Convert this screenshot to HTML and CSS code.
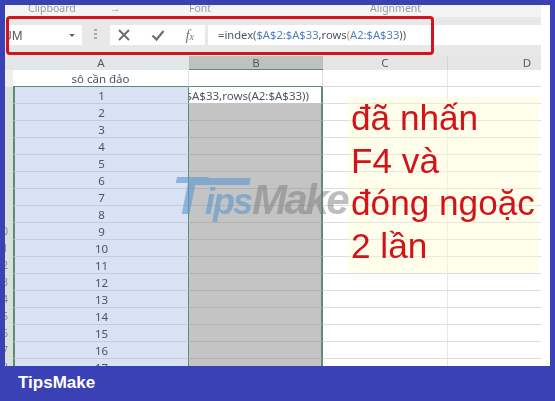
FILE: index.html
```html
<!DOCTYPE html>
<html lang="en">
<head>
    <meta charset="UTF-8">
    <meta name="viewport" content="width=device-width, initial-scale=1.0">
    <title>TipsMake</title>
    <link rel="stylesheet" href="styles.css">
</head>
<body>
    <div class="shot">
        <!-- ribbon group labels, cut off at the top -->
        <div class="ribbon">
            <span class="group group-clip">Clipboard</span>
            <span class="group group-launch">→</span>
            <span class="group group-font">Font</span>
            <span class="group group-align">Alignment</span>
        </div>

        <div class="formula-bar">
            <div class="name-box">
                <span class="name-text">UM</span>
                <span class="name-arrow"></span>
            </div>
            <div class="grip"></div>
            <div class="fx-box">
                <svg class="fx-icon" width="14" height="14" viewBox="0 0 14 14"><path d="M2 2 L12 12 M12 2 L2 12" fill="none" stroke="#6f6f6f" stroke-width="2"/></svg>
                <svg class="fx-icon" width="14" height="14" viewBox="0 0 14 14"><path d="M1.5 7.5 L5.5 11.5 L12.5 3" fill="none" stroke="#6f6f6f" stroke-width="2.2"/></svg>
                <span class="fx-text">f<small>x</small></span>
            </div>
            <div class="formula-input">=index(<span class="ref">$A$2:$A$33</span>,rows<span class="paren">(</span><span class="ref">A2:$A$33</span>))</div>
        </div>

        <div class="col-heads">
            <div class="corner"></div>
            <div class="head head-a">A</div>
            <div class="head head-b">B</div>
            <div class="head head-c">C</div>
            <div class="head head-d">D</div>
        </div>

        <div class="row row-title"><div class="gutter"></div><div class="cell a">sô cần đảo</div><div class="cell b"></div><div class="cell c"></div><div class="cell d"></div></div>
        <div class="row first"><div class="gutter"></div><div class="cell a">1</div><div class="cell b active"><span>$A$33,rows(A2:$A$33))</span></div><div class="cell c"></div><div class="cell d"></div></div>
        <div class="row"><div class="gutter"></div><div class="cell a">2</div><div class="cell b"></div><div class="cell c"></div><div class="cell d"></div></div>
        <div class="row"><div class="gutter"></div><div class="cell a">3</div><div class="cell b"></div><div class="cell c"></div><div class="cell d"></div></div>
        <div class="row"><div class="gutter"></div><div class="cell a">4</div><div class="cell b"></div><div class="cell c"></div><div class="cell d"></div></div>
        <div class="row"><div class="gutter"></div><div class="cell a">5</div><div class="cell b"></div><div class="cell c"></div><div class="cell d"></div></div>
        <div class="row"><div class="gutter"></div><div class="cell a">6</div><div class="cell b"></div><div class="cell c"></div><div class="cell d"></div></div>
        <div class="row"><div class="gutter"></div><div class="cell a">7</div><div class="cell b"></div><div class="cell c"></div><div class="cell d"></div></div>
        <div class="row"><div class="gutter"></div><div class="cell a">8</div><div class="cell b"></div><div class="cell c"></div><div class="cell d"></div></div>
        <div class="row"><div class="gutter">0</div><div class="cell a">9</div><div class="cell b"></div><div class="cell c"></div><div class="cell d"></div></div>
        <div class="row"><div class="gutter">1</div><div class="cell a">10</div><div class="cell b"></div><div class="cell c"></div><div class="cell d"></div></div>
        <div class="row"><div class="gutter">2</div><div class="cell a">11</div><div class="cell b"></div><div class="cell c"></div><div class="cell d"></div></div>
        <div class="row"><div class="gutter">3</div><div class="cell a">12</div><div class="cell b"></div><div class="cell c"></div><div class="cell d"></div></div>
        <div class="row"><div class="gutter">4</div><div class="cell a">13</div><div class="cell b"></div><div class="cell c"></div><div class="cell d"></div></div>
        <div class="row"><div class="gutter">5</div><div class="cell a">14</div><div class="cell b"></div><div class="cell c"></div><div class="cell d"></div></div>
        <div class="row"><div class="gutter">6</div><div class="cell a">15</div><div class="cell b"></div><div class="cell c"></div><div class="cell d"></div></div>
        <div class="row"><div class="gutter">7</div><div class="cell a">16</div><div class="cell b"></div><div class="cell c"></div><div class="cell d"></div></div>
        <div class="row"><div class="gutter">8</div><div class="cell a">17</div><div class="cell b"></div><div class="cell c"></div><div class="cell d"></div></div>

        <!-- things drawn over the sheet -->
        <div class="red-box"></div>
        <div class="note">
            <div>đã nhấn</div>
            <div>F4 và</div>
            <div>đóng ngoặc</div>
            <div>2 lần</div>
        </div>
        <div class="watermark">
            <span class="mark-tips"><span class="mark-t">T</span><span class="mark-bar"></span><span class="mark-ips">ips</span></span><span class="mark-make">Make</span>
        </div>
    </div>

    <div class="footer">TipsMake</div>
</body>
</html>
```

FILE: styles.css
```css
html, body {
    margin: 0;
    padding: 0;
    width: 555px;
    height: 401px;
    overflow: hidden;
}

body {
    background: #3a41b5;
    display: flex;
    flex-direction: column;
}

/* the pasted excel picture */
.shot {
    position: relative;
    width: 545px;
    height: 361px;
    margin: 5px 5px 0 5px;
    background: #ffffff;
    overflow: hidden;
    flex: none;
    font-family: "Noto Sans", sans-serif;
    color: #4b5563;
    filter: blur(0.35px);
}

.ribbon {
    height: 12px;
    margin-right: 9px;
    box-sizing: border-box;
    padding-bottom: 4px;
    background: #f4f4f4;
    overflow: hidden;
    display: flex;
    align-items: flex-end;
    font-size: 10.5px;
    line-height: 10px;
    color: #9a9a9a;
}

.group {
    flex: none;
}

.group-clip {
    margin-left: 23px;
    width: 82px;
}

.group-launch {
    width: 79px;
}

.group-font {
    width: 181px;
}

.formula-bar {
    height: 39px;
    margin-right: 9px;
    box-sizing: border-box;
    padding: 8px 0 11px 3px;
    background: #e8e8e8;
    display: flex;
    align-items: stretch;
}

.name-box {
    width: 74px;
    background: #ffffff;
    display: flex;
    align-items: center;
    justify-content: space-between;
    padding: 0 7px 0 0;
    box-sizing: border-box;
    overflow: hidden;
    font-size: 12px;
}

.name-text {
    margin-left: -5px;
    color: #555555;
}

.name-arrow {
    width: 0;
    height: 0;
    border-left: 3px solid transparent;
    border-right: 3px solid transparent;
    border-top: 3px solid #666666;
}

.grip {
    width: 3px;
    margin: 4px 13px 4px 12px;
    background: repeating-linear-gradient(#a8a8a8 0 2px, transparent 2px 4px);
}

.fx-box {
    width: 95px;
    margin-right: 3px;
    background: #ffffff;
    display: flex;
    align-items: center;
    justify-content: space-between;
    padding: 0 11px 0 7px;
    box-sizing: border-box;
}

.fx-text {
    font-family: "Liberation Serif", serif;
    font-style: italic;
    font-size: 15px;
    color: #777777;
}

.fx-text small {
    font-size: 10px;
}

.formula-input {
    flex: 1;
    background: #ffffff;
    padding-left: 10px;
    font-size: 11.2px;
    line-height: 19px;
    color: #4b5563;
    white-space: nowrap;
}

.ref {
    color: #4f81bd;
}

.paren {
    color: #d98a4a;
}

.col-heads {
    height: 14px;
    margin-right: 9px;
    display: flex;
    font-size: 11.5px;
    line-height: 14px;
    text-align: center;
    color: #555b60;
    background: #e6e6e6;
}

.corner {
    width: 8px;
    flex: none;
}

.head {
    flex: none;
    box-sizing: border-box;
}

.head-a {
    width: 176px;
    background: #e4e7ea;
}

.head-b {
    width: 134px;
    background: #bec2be;
    border-bottom: 1px solid #5f8a75;
}

.head-c {
    width: 125px;
    border-right: 1px solid #d4d4d4;
}

.head-d {
    flex: 1;
    padding-left: 65px;
}

.row {
    height: 17px;
    display: flex;
    font-size: 11.5px;
    line-height: 17px;
    color: #4b5563;
}

.gutter {
    width: 8px;
    flex: none;
    box-sizing: border-box;
    background: #d9e0d8;
    font-size: 10px;
    line-height: 17px;
    text-align: right;
    padding-right: 5px;
    color: #7d8794;
    overflow: hidden;
    direction: rtl;
}

.row-title .gutter {
    background: #eeeeee;
}

.cell {
    flex: none;
    box-sizing: border-box;
    border-bottom: 1px solid #dcdcdc;
    overflow: hidden;
    white-space: nowrap;
}

.a {
    width: 176px;
    background: #d9e2f3;
    text-align: center;
    border-left: 2px solid #5f8a75;
    border-right: 1px solid #5f8a75;
    border-bottom-color: #c6cedd;
}

.b {
    width: 134px;
    background: #c4c4c4;
    border-right: 2px solid #5f8a75;
    border-bottom-color: #b2b2b2;
}

.c {
    width: 125px;
    border-right: 1px solid #e6e6e6;
}

.d {
    width: 93px;
}

.row-title .a {
    background: #ffffff;
    border-left: 0;
    border-right-color: #e0e0e0;
    border-bottom-color: #5f8a75;
}

.row-title .b {
    background: #ffffff;
    border-right-color: #dcdcdc;
    border-right-width: 1px;
    border-bottom-color: #5f8a75;
}

.active {
    background: #ffffff;
    display: flex;
    justify-content: flex-end;
    padding-right: 12px;
    border-bottom-color: #c4c4c4;
}

.active span {
    flex: none;
}

/* red annotation round the formula bar */
.red-box {
    position: absolute;
    left: 1px;
    top: 11px;
    width: 428px;
    height: 39px;
    box-sizing: border-box;
    border: 3px solid #d2141c;
    border-radius: 4px;
}

.note {
    position: absolute;
    left: 343px;
    top: 92px;
    width: 190px;
    height: 176px;
    padding-left: 3px;
    box-sizing: border-box;
    background: rgba(255, 253, 205, 0.42);
    color: #d4121a;
    font-family: "Liberation Sans", sans-serif;
    font-size: 35.2px;
    line-height: 42.5px;
    white-space: nowrap;
}

/* logo stamped over the picture */
.watermark {
    position: absolute;
    left: 167px;
    top: 162px;
    display: flex;
    align-items: baseline;
    font-family: "Liberation Sans", sans-serif;
    font-weight: bold;
    font-style: italic;
    line-height: 56px;
    white-space: nowrap;
}

.mark-tips {
    position: relative;
    display: flex;
    align-items: baseline;
    color: #5a96cd;
    opacity: 0.6;
}

.mark-t {
    font-size: 54px;
}

.mark-bar {
    position: absolute;
    left: 24px;
    top: 11px;
    width: 54px;
    height: 7px;
    background: #5a96cd;
    transform: skewX(-12deg);
}

.mark-ips {
    font-size: 36px;
    letter-spacing: -2px;
}

.mark-make {
    margin-left: 1px;
    font-size: 42px;
    letter-spacing: -2.5px;
    color: rgba(120, 120, 120, 0.48);
}

.footer {
    flex: 1;
    padding-left: 18px;
    font-family: "Liberation Sans", sans-serif;
    font-weight: bold;
    font-size: 17px;
    line-height: 34px;
    color: #ffffff;
}
```
